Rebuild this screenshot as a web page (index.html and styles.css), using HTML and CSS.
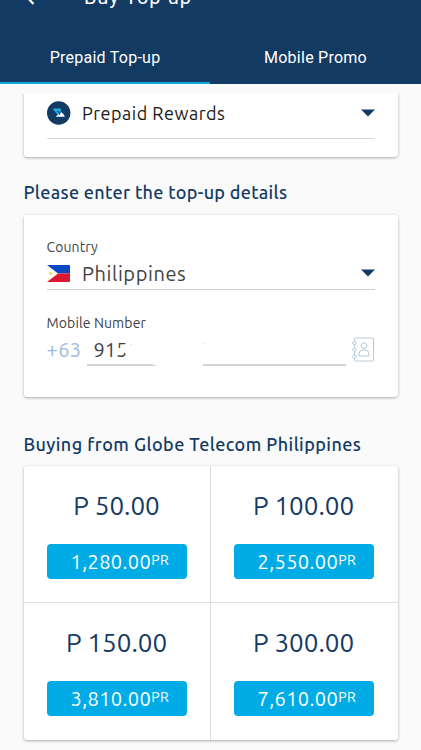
FILE: index.html
```html
<!DOCTYPE html>
<html lang="en">
<head>
<meta charset="utf-8">
<title>Buy Top-up</title>
<link rel="stylesheet" href="styles.css">
</head>
<body>
<header class="header">
  <div class="titlebar">
    <svg class="back" width="12" height="20" viewBox="0 0 12 20"><path d="M11 1 2 10l8.5 9" fill="none" stroke="#fff" stroke-width="2.2"/></svg>
    <h1 class="title">Buy Top-up</h1>
  </div>
  <nav class="tabs">
    <a class="tab active">Prepaid Top-up</a>
    <a class="tab">Mobile Promo</a>
  </nav>
</header>
<main class="content">
  <section class="card rewards">
    <div class="select rewards-select">
      <svg class="logo" width="24" height="24" viewBox="0 0 24 24"><circle cx="11.700" cy="12" r="11.700" fill="#133a62"/><path d="M5.500 7.500h8.300v4.500l-2.600-2.300H9.500l3.500 3-1.800 1.500z" fill="#19b2ea"/><path d="m8.700 15.800 2.600-2.500 1.500 1 1.200-3.300 2.800 2.500 1 2.300z" fill="#fff"/></svg>
      <span class="rewards-name">Prepaid Rewards</span>
      <svg class="arrow" width="14" height="8" viewBox="0 0 14 8"><path d="M0 .5h14L7 7.500z" fill="#133a62"/></svg>
    </div>
  </section>
  <h2 class="heading h-details">Please enter the top-up details</h2>
  <section class="card details">
    <div class="label l-country">Country</div>
    <div class="select country-select">
      <svg class="flag" width="23" height="17" viewBox="0 0 23 17"><path d="M0 0h22q1 0 1 1v7.500H0z" fill="#0c47c2"/><path d="M0 8.500h23V16q0 1-1 1H0z" fill="#dd1733"/><path d="M0 0 11 8.500 0 17z" fill="#fff"/><circle cx="3.800" cy="8.500" r="1.700" fill="#f9dc63"/><path d="M.8 2.500h1v1h-1zM.8 13.500h1v1h-1zM8.300 8h1v1h-1z" fill="#f9dc63"/></svg>
      <span class="country-name">Philippines</span>
      <svg class="arrow" width="14" height="8" viewBox="0 0 14 8"><path d="M0 .5h14L7 7.500z" fill="#133a62"/></svg>
    </div>
    <div class="label l-mobile">Mobile Number</div>
    <div class="phone">
      <span class="code">+63</span>
      <div class="number"><span class="digits">915</span>
        <svg class="mask" width="118" height="28" viewBox="0 0 118 28"><path d="M41 0h75v28H76q-8-1-13-4H38v-3l1-1v-5q-2-3-8-2.500V9l8-.5V6h2z" fill="#fff"/><path d="m117 5 2-1M43.500 5l1 1" stroke="#ccc"/></svg>
      </div>
      <svg class="contacts" width="23" height="25" viewBox="0 0 23 25" fill="none" stroke="#b5cbdc" stroke-width="1"><rect x="2.500" y="1" width="19" height="23" rx="1"/><circle cx="12" cy="8.700" r="2.800"/><path d="M7 19v-2q0-4 4-4h2q4 0 4 4v2z"/><g fill="#fff"><ellipse cx="2.500" cy="6" rx="2" ry="1.400"/><ellipse cx="2.500" cy="12.700" rx="2" ry="1.400"/><ellipse cx="2.500" cy="19.500" rx="2" ry="1.400"/></g></svg>
    </div>
  </section>
  <h2 class="heading h-buying">Buying from Globe Telecom Philippines</h2>
  <section class="card offers">
    <div class="offer"><div class="price">P 50.00</div><button class="buy"><span>1,280.00</span><sup>PR</sup></button></div>
    <div class="offer"><div class="price">P 100.00</div><button class="buy"><span>2,550.00</span><sup>PR</sup></button></div>
    <div class="offer"><div class="price">P 150.00</div><button class="buy"><span>3,810.00</span><sup>PR</sup></button></div>
    <div class="offer"><div class="price">P 300.00</div><button class="buy"><span>7,610.00</span><sup>PR</sup></button></div>
  </section>
</main>
</body>
</html>
```
FILE: styles.css
```css
* { box-sizing: border-box; }
body { margin: 0; height: 750px; overflow: hidden; background: #fafafa; font-family: Ubuntu, "Noto Sans", sans-serif; color: #424242; }
svg { display: block; flex: none; }
.header { height: 84px; background: #133a62; color: #fff; font-family: Roboto, sans-serif; overflow: hidden; }
.titlebar { height: 30px; display: flex; align-items: flex-start; padding-left: 23px; }
.back { margin-top: -15px; }
.title { margin: -16px 0 0 49px; font: 400 20px/26px Roboto, sans-serif; letter-spacing: .9px; white-space: nowrap; }
.tabs { height: 54px; display: grid; grid-template-columns: 210px 211px; }
.tab { display: flex; align-items: center; justify-content: center; padding-top: 2px; font-size: 16px; letter-spacing: .25px; border-bottom: 2px solid transparent; white-space: nowrap; }
.tab.active { border-bottom-color: #08a9df; }
.content { padding: 9px 23.5px 0; }
.card { background: #fff; border-radius: 3px; box-shadow: 0 1px 3px rgba(0,0,0,.32); }
.rewards { height: 64px; padding: 0 23px; clip-path: inset(0 -5px -6px -5px); border-radius: 0 0 3px 3px; }
.select { display: flex; align-items: center; }
.rewards-select { height: 46px; padding-bottom: 5px; border-bottom: 1px solid #d8d8d8; }
.rewards-name { margin-left: 11.500px; font-size: 18px; letter-spacing: .5px; color: #181818; }
.arrow { margin-left: auto; }
.heading { margin: 0; font-weight: 500; font-size: 18px; line-height: 26px; letter-spacing: .32px; color: #133a62; white-space: nowrap; }
.h-details { margin-top: 22px; }
.details { margin-top: 10px; height: 182px; padding: 22px 23px 0; }
.label { font-size: 14px; line-height: 20px; letter-spacing: .12px; }
.country-select { height: 33px; border-bottom: 1px solid #d0d0d0; }
.flag { margin-left: .5px; }
.country-name { margin-left: 12px; font-size: 20px; letter-spacing: .6px; }
.l-mobile { margin-top: 23px; }
.phone { display: flex; height: 34px; }
.code { width: 40px; color: #9dbbdc; font-size: 20px; line-height: 34px; letter-spacing: .4px; white-space: nowrap; }
.number { position: relative; width: 259px; height: 33px; border-bottom: 2px solid #d3d3d3; padding-left: 7px; font-size: 20px; line-height: 33px; }
.mask { position: absolute; left: 0; bottom: -3px; }
.contacts { margin: 4px 0 0 6px; }
.h-buying { margin-top: 34px; letter-spacing: .44px; }
.offers { margin-top: 9px; height: 274px; display: grid; grid-template-columns: 187px 187px; grid-template-rows: 137px 137px; }
.offer { padding: 22px 23px 0; border-right: 1px solid #dedede; border-bottom: 1px solid #dedede; }
.offer:nth-child(2n) { border-right: 0; padding-right: 24px; }
.offer:nth-child(n+3) { border-bottom: 0; }
.price { height: 36px; text-align: center; color: #133a62; font-size: 26px; line-height: 36px; white-space: nowrap; }
.buy { display: flex; width: 140px; height: 35px; margin-top: 20px; padding: 0 0 0 24px; border: 0; border-radius: 4px; background: #00abe6; color: #fff; font-family: inherit; font-size: 20px; line-height: 35px; letter-spacing: .4px; }
.buy sup { font-size: 14px; line-height: 32px; }
```
